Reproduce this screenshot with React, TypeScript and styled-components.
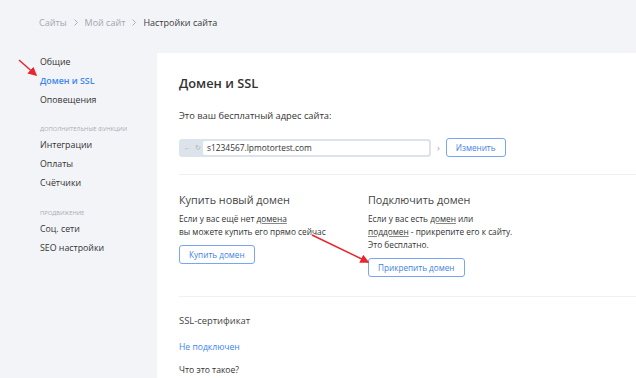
import styled, { createGlobalStyle } from 'styled-components';

const GlobalStyle = createGlobalStyle`
  html, body {
    margin: 0;
    padding: 0;
    background: #f3f4f8;
    font-family: "Open Sans", "Liberation Sans", sans-serif;
    color: #333;
    overflow: hidden;
  }
`;

const Page = styled.div`
  position: relative;
  width: 636px;
  height: 378px;
  overflow: hidden;
`;

const Breadcrumbs = styled.div`
  height: 53px;
  display: flex;
  align-items: center;
  gap: 6px;
  padding-left: 39px;
  padding-bottom: 8px;
  box-sizing: border-box;
  font-size: 9px;
  color: #a3a6ad;
`;

const Crumb = styled.span<{ $current?: boolean }>`
  color: ${(p) => (p.$current ? '#3a3a3a' : '#a3a6ad')};
`;

const CrumbArrow = styled.svg`
  width: 4px;
  height: 7px;
  margin: 0 1px;
`;

const Layout = styled.div`
  display: flex;
  height: 325px;
`;

const Sidebar = styled.nav`
  width: 157px;
  flex-shrink: 0;
  padding-left: 40px;
  box-sizing: border-box;
  display: flex;
  flex-direction: column;
`;

const NavItem = styled.div<{ $active?: boolean }>`
  font-size: 8.8px;
  line-height: 18.8px;
  color: ${(p) => (p.$active ? '#3d86f0' : '#333')};
  font-weight: ${(p) => (p.$active ? 600 : 400)};
`;

const NavLabel = styled.div`
  margin-top: 15px;
  margin-bottom: 2px;
  font-size: 5.8px;
  line-height: 10px;
  text-transform: uppercase;
  color: #a9acb3;
`;

const Panel = styled.main`
  flex: 1;
  background: #fff;
  padding: 19px 0 0 22px;
`;

const Title = styled.h1`
  margin: 0;
  font-size: 12.8px;
  line-height: 22px;
  font-weight: 600;
  color: #333;
`;

const Lead = styled.p`
  margin: 15px 0 0;
  font-size: 9.3px;
  line-height: 14px;
`;

const AddressRow = styled.div`
  margin-top: 15px;
  display: flex;
  align-items: center;
  gap: 6px;
`;

const UrlBar = styled.div`
  width: 252px;
  height: 18px;
  box-sizing: border-box;
  display: flex;
  align-items: center;
  padding: 2px 2px 2px 5px;
  background: #dde3ea;
  border-radius: 3px;
`;

const UrlIcons = styled.span`
  width: 19px;
  font-size: 7px;
  color: #aab1bb;
  letter-spacing: 1px;
`;

const UrlField = styled.div`
  flex: 1;
  height: 14px;
  background: #fff;
  border-radius: 2px;
  display: flex;
  align-items: center;
  padding-left: 4px;
  font-size: 8.4px;
  color: #333;
`;

const Chevron = styled.span`
  font-size: 9px;
  color: #9aa0a8;
`;

const OutlineButton = styled.button`
  display: block;
  height: 19px;
  padding: 0 9px;
  background: #fff;
  border: 1px solid #78a6f2;
  border-radius: 3px;
  font-family: inherit;
  font-size: 8.2px;
  color: #3f7fe6;
  cursor: pointer;
`;

const Spacer = styled.div<{ $h: number }>`
  height: ${(p) => p.$h}px;
`;

const Divider = styled.hr`
  margin: 0;
  border: none;
  border-top: 1px solid #eef0f3;
`;

const Columns = styled.div`
  display: grid;
  grid-template-columns: 189px 1fr;
  padding: 16px 0 19px;
`;

const Column = styled.div`
  display: flex;
  flex-direction: column;
  align-items: flex-start;
`;

const ColumnTitle = styled.h2`
  margin: 0;
  font-size: 10.8px;
  line-height: 18px;
  font-weight: 400;
  color: #444;
`;

const Body = styled.p`
  margin: 3px 0 7px;
  font-size: 8.3px;
  line-height: 13px;
  color: #333;
`;

const Under = styled.span`
  text-decoration: underline;
  text-decoration-color: #888;
`;

const SslTitle = styled.h3`
  margin: 17px 0 0;
  font-size: 9.4px;
  line-height: 14px;
  font-weight: 400;
  color: #444;
`;

const StatusLink = styled.a`
  display: block;
  margin-top: 12px;
  font-size: 8.6px;
  line-height: 14px;
  color: #3d86f0;
`;

const Help = styled.div`
  margin-top: 9px;
  font-size: 8.6px;
  line-height: 14px;
  color: #333;
`;

const Annotations = styled.svg`
  position: absolute;
  left: 0;
  top: 0;
  pointer-events: none;
`;

function Arrow() {
  return (
    <CrumbArrow viewBox="0 0 4 7">
      <path d="M0.5 0.5 L3.5 3.5 L0.5 6.5" fill="none" stroke="#a3a6ad" strokeWidth="0.9" />
    </CrumbArrow>
  );
}

export default function App() {
  return (
    <Page>
      <GlobalStyle />
      <Breadcrumbs>
        <Crumb>Сайты</Crumb>
        <Arrow />
        <Crumb>Мой сайт</Crumb>
        <Arrow />
        <Crumb $current>Настройки сайта</Crumb>
      </Breadcrumbs>
      <Layout>
        <Sidebar>
          <NavItem>Общие</NavItem>
          <NavItem $active>Домен и SSL</NavItem>
          <NavItem>Оповещения</NavItem>
          <NavLabel>Дополнительные функции</NavLabel>
          <NavItem>Интеграции</NavItem>
          <NavItem>Оплаты</NavItem>
          <NavItem>Счётчики</NavItem>
          <NavLabel>Продвижение</NavLabel>
          <NavItem>Соц. сети</NavItem>
          <NavItem>SEO настройки</NavItem>
        </Sidebar>
        <Panel>
          <Title>Домен и SSL</Title>
          <Lead>Это ваш бесплатный адрес сайта:</Lead>
          <AddressRow>
            <UrlBar>
              <UrlIcons>← ↻</UrlIcons>
              <UrlField>s1234567.lpmotortest.com</UrlField>
            </UrlBar>
            <Chevron>›</Chevron>
            <OutlineButton>Изменить</OutlineButton>
          </AddressRow>
          <Spacer $h={17} />
          <Divider />
          <Columns>
            <Column>
              <ColumnTitle>Купить новый домен</ColumnTitle>
              <Body>
                Если у вас ещё нет <Under>домена</Under>
                <br />
                вы можете купить его прямо сейчас
              </Body>
              <OutlineButton>Купить домен</OutlineButton>
            </Column>
            <Column>
              <ColumnTitle>Подключить домен</ColumnTitle>
              <Body>
                Если у вас есть <Under>домен</Under> или
                <br />
                <Under>поддомен</Under> - прикрепите его к сайту.
                <br />
                Это бесплатно.
              </Body>
              <OutlineButton>Прикрепить домен</OutlineButton>
            </Column>
          </Columns>
          <Divider />
          <SslTitle>SSL-сертификат</SslTitle>
          <StatusLink>Не подключен</StatusLink>
          <Help>Что это такое?</Help>
        </Panel>
      </Layout>
      <Annotations width="636" height="378" viewBox="0 0 636 378">
        <defs>
          <marker id="head" markerWidth="6" markerHeight="6" refX="5" refY="3" orient="auto">
            <path d="M0,0 L6,3 L0,6 Z" fill="#e8262b" />
          </marker>
        </defs>
        <line x1="19" y1="60" x2="36" y2="75" stroke="#e8262b" strokeWidth="1.5" markerEnd="url(#head)" />
        <line x1="312" y1="235" x2="368" y2="262" stroke="#e8262b" strokeWidth="1.5" markerEnd="url(#head)" />
      </Annotations>
    </Page>
  );
}
